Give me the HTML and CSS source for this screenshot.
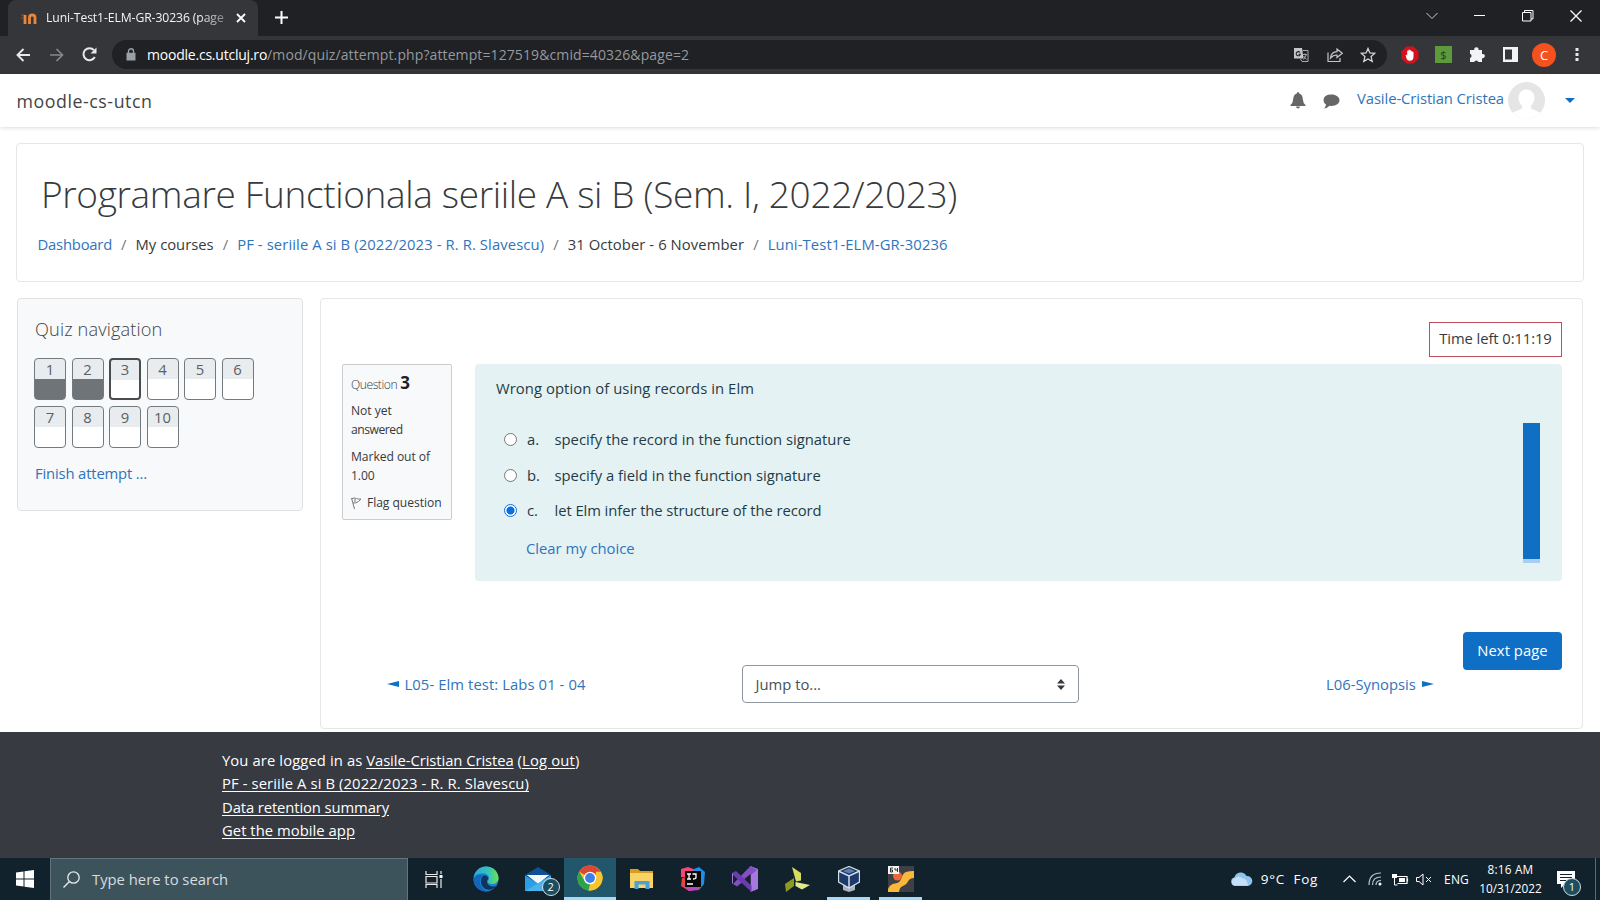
FILE: index.html
```html
<!DOCTYPE html>
<html lang="en">
<head>
<meta charset="utf-8">
<title>Luni-Test1-ELM-GR-30236 (page 3 of 10)</title>
<link rel="stylesheet" href="styles.css">
</head>
<body>
<div class="tabstrip">
  <div class="tab">
    <svg class="favicon" width="18" height="14" viewBox="0 0 18 14"><path d="M1 4h4M1 7h2" stroke="#7a4a2c" stroke-width="1.5"/><path d="M5 13V4M9.500 13V6.500q0-2.500 2.700-2.500t2.800 2.500V13" fill="none" stroke="#e8873a" stroke-width="2.800"/></svg>
    <span class="tab-title">Luni-Test1-ELM-GR-30236 (page</span>
    <svg class="tab-close" width="10" height="10" viewBox="0 0 10 10"><path d="M1 1l8 8M9 1l-8 8" stroke="#fff" stroke-width="1.800"/></svg>
  </div>
  <svg class="newtab" width="13" height="13" viewBox="0 0 13 13"><path d="M6.500 0v13M0 6.500h13" stroke="#fff" stroke-width="2"/></svg>
  <div class="winctl">
    <svg width="12" height="8" viewBox="0 0 12 8"><path d="M.5 1l5.500 5.500L11.500 1" fill="none" stroke="#ccc"/></svg>
    <svg width="12" height="12" viewBox="0 0 12 12"><path d="M0 5.500h11" stroke="#fff"/></svg>
    <svg width="12" height="12" viewBox="0 0 12 12"><path d="M.5 2.500h8.500v8.500H.5zM2.500 2.500v-2h8.500v8.500H9" fill="none" stroke="#fff"/></svg>
    <svg width="12" height="12" viewBox="0 0 12 12"><path d="M.5.500l11 11M11.500.500l-11 11" stroke="#fff" stroke-width="1.200"/></svg>
  </div>
</div>
<div class="toolbar">
  <svg class="nav-back" width="14" height="14" viewBox="0 0 14 14"><path d="M14 7H1.500M7.500 1L1.500 7l6 6" fill="none" stroke="#e8e8e8" stroke-width="1.900"/></svg>
  <svg class="nav-fwd" width="14" height="14" viewBox="0 0 14 14"><path d="M0 7h12.500M6.500 1l6 6-6 6" fill="none" stroke="#86888b" stroke-width="1.700"/></svg>
  <svg class="nav-reload" width="15" height="15" viewBox="0 0 15 15"><path d="M12.800 10A6 6 0 1 1 12 3.200" fill="none" stroke="#e8e8e8" stroke-width="2"/><path d="M14.500.500v6h-6z" fill="#e8e8e8"/></svg>
  <div class="omnibox">
    <svg class="lock" width="10" height="13" viewBox="0 0 10 13"><path d="M.5 4.800h9V12.500h-9z" fill="#9aa0a6"/><path d="M2.500 5V3.300a2.500 2.500 0 0 1 5 0V5" fill="none" stroke="#9aa0a6" stroke-width="1.400"/></svg>
    <span class="url"><span class="host">moodle.cs.utcluj.ro</span><span class="path">/mod/quiz/attempt.php?attempt=127519&amp;cmid=40326&amp;page=2</span></span>
    <div class="omni-actions">
      <svg width="16" height="16" viewBox="0 0 16 16"><path d="M1 1h8l1.500 10.500H1z" fill="#c4c7c9"/><path d="M7 5.500a2.100 2.100 0 1 0 .3 1.800H5.500" fill="none" stroke="#202124" stroke-width="1.100"/><path d="M9.500 3.500h5.500v11H9l-1.500-2.500M9.500 7.500h4.500M12 6.500v1M10.500 12.500l3-5M10.500 9l3 3.500" fill="none" stroke="#a9abad"/></svg>
      <svg width="16" height="16" viewBox="0 0 16 16"><path d="M1 5.500v9h12v-3.500" fill="none" stroke="#c4c7c9" stroke-width="1.200"/><path d="M3.500 11q.8-6 6.500-6.300V2l5.300 4.300L10 10.500V8q-4 0-6.500 3z" fill="none" stroke="#c4c7c9" stroke-width="1.200"/></svg>
      <svg width="16" height="16" viewBox="0 0 16 16"><path d="M8 1.500l1.900 4.500 4.800.4-3.600 3.200 1.100 4.800L8 11.900l-4.200 2.500 1.100-4.800L1.300 6.400 6.100 6z" fill="none" stroke="#d4d6d8" stroke-width="1.300"/></svg>
    </div>
  </div>
  <div class="extensions">
    <svg width="18" height="18" viewBox="0 0 18 18"><path d="M5.500.500h7l5 5v7l-5 5h-7l-5-5v-7z" fill="#d5121c"/><path d="M4.600 9q.8-.8 1.600.4V5q.6-.8 1.200 0V3.900q.7-.8 1.400 0V4.500q.7-.7 1.400.1v1q.8-.6 1.500.1.800 0 .8 1V10.500q0 4.300-3.700 4.300-2.900 0-3.600-3.300z" fill="#fff"/></svg>
    <span class="ext-green">$</span>
    <svg width="17" height="17" viewBox="0 0 17 17"><path d="M1 4h4.300a2.200 2.200 0 1 1 4.200 0H13v4a2.200 2.200 0 1 1 0 4.200V16H9.400a2.200 2.200 0 0 0-4.200 0H1v-4a2.200 2.200 0 0 0 0-4.200z" fill="#f1f3f4"/></svg>
    <svg width="15" height="15" viewBox="0 0 15 15"><path d="M0 0h15v15H0zM2 2.500v10h7v-10z" fill="#f1f3f4" fill-rule="evenodd"/></svg>
    <span class="profile">C</span>
    <svg width="4" height="15" viewBox="0 0 4 15"><path d="M.5 1h3v3h-3zM.5 6h3v3h-3zM.5 11h3v3h-3z" fill="#e8e8e8"/></svg>
  </div>
</div>

<nav class="navbar">
  <span class="brand">moodle-cs-utcn</span>
  <div class="user">
    <svg class="bell" width="16" height="17" viewBox="0 0 16 17"><path d="M8 0q1.200 0 1.200 1.500Q12.500 2.400 12.800 7q.2 4 2.700 6v1H.5v-1q2.500-2 2.700-6 .3-4.600 3.600-5.500Q6.800 0 8 0zM6 14.500h4Q9.800 16.500 8 16.500t-2-2z" fill="#666"/></svg>
    <svg class="chat" width="17" height="15" viewBox="0 0 17 15"><path d="M8.500.500C13 .5 16.500 3 16.500 6.200s-3.500 5.700-8 5.700q-1 0-2-.2Q4 14.500 1 14.500q1.800-1.500 2-4Q.5 9 .5 6.200.5.500 8.500.500z" fill="#666"/></svg>
    <a class="username">Vasile-Cristian Cristea</a>
    <svg class="avatar" width="37" height="37" viewBox="0 0 37 37"><defs><clipPath id="av"><circle cx="18.500" cy="18.500" r="18.500"/></clipPath></defs><g clip-path="url(#av)"><path d="M0 0h37v37H0z" fill="#e5e5e5"/><path d="M18.500 7.500c5 0 8 4 8 8.500 0 3.500-2 6.500-3.500 8v2.500l9 4V37H5v-6.500l9-4V24c-1.500-1.500-3.500-4.500-3.500-8 0-4.500 3-8.500 8-8.500z" fill="#fff"/></g></svg>
    <svg class="caret" width="10" height="5" viewBox="0 0 10 5"><path d="M0 0h10L5 5z" fill="#0f6fc5"/></svg>
  </div>
</nav>

<header class="page-header">
  <h1>Programare Functionala seriile A si B (Sem. I, 2022/2023)</h1>
  <div class="crumbs">
    <a class="c-dash">Dashboard</a><i>/</i><span>My courses</span><i>/</i><a class="course-link">PF - seriile A si B (2022/2023 - R. R. Slavescu)</a><i>/</i><span class="c-week">31 October - 6 November</span><i>/</i><a class="c-quiz">Luni-Test1-ELM-GR-30236</a>
  </div>
</header>

<div class="columns">
  <aside class="quiznav">
    <h2>Quiz navigation</h2>
    <div class="qgrid">
      <span class="q done">1</span><span class="q done">2</span><span class="q current">3</span><span class="q">4</span><span class="q">5</span><span class="q">6</span><span class="q">7</span><span class="q">8</span><span class="q">9</span><span class="q">10</span>
    </div>
    <a class="finish">Finish attempt ...</a>
  </aside>
  <main class="region">
    <div class="timer">Time left 0:11:19</div>
    <div class="question">
      <div class="info">
        <div class="qno"><span class="tight">Question</span> <b>3</b></div>
        <div class="state">Not yet<br><span class="tight">answered</span></div>
        <div class="grade">Marked out of<br>1.00</div>
        <div class="flag"><svg width="11" height="12" viewBox="0 0 11 12"><path d="M.5 1L3.500 12M1 1.500q2.500-1 4.500 0T10 2L7.500 4.500q-3 2-5.500 1.500M4 2v3" fill="none" stroke="#777" stroke-width="1"/></svg><span>Flag question</span></div>
      </div>
      <div class="formulation">
        <div class="answers">
          <p class="qtext">Wrong option of using records in Elm</p>
          <label class="opt"><span class="radio"></span><span class="let">a.</span><span>specify the record in the function signature</span></label>
          <label class="opt"><span class="radio"></span><span class="let">b.</span><span>specify a field in the function signature</span></label>
          <label class="opt"><span class="radio on"></span><span class="let">c.</span><span class="o3">let Elm infer the structure of the record</span></label>
          <a class="clear">Clear my choice</a>
        </div>
        <div class="meter"></div>
      </div>
    </div>
    <div class="submit"><span class="next">Next page</span></div>
    <div class="activity-nav">
      <a class="prev"><svg width="12" height="6" viewBox="0 0 12 6"><path d="M0 3L12 0v6z" fill="#0f6fc5"/></svg><span>L05- Elm test: Labs 01 - 04</span></a>
      <div class="jump"><span>Jump to...</span><svg width="8" height="11" viewBox="0 0 8 11"><path d="M0 4.500h8L4 0zM0 6.500h8L4 11z" fill="#343a40"/></svg></div>
      <a class="nextact"><span>L06-Synopsis</span><svg width="12" height="6" viewBox="0 0 12 6"><path d="M12 3L0 0v6z" fill="#0f6fc5"/></svg></a>
    </div>
  </main>
</div>

<footer class="footer">
  <div><span class="f-login">You are logged in as</span> <a class="f-user">Vasile-Cristian Cristea</a> <span class="f-out">(<a>Log out</a>)</span></div>
  <div><a class="course-link">PF - seriile A si B (2022/2023 - R. R. Slavescu)</a></div>
  <div><a class="f-data">Data retention summary</a></div>
  <div><a class="f-app">Get the mobile app</a></div>
</footer>

<div class="taskbar">
  <div class="start"><svg width="18" height="18" viewBox="0 0 18 18"><path d="M0 2.500L7.500 1.500v7H0zM8.500 1.300L18 0v8.500H8.500zM0 9.500h7.500v7L0 15.500zM8.500 9.500H18V18l-9.500-1.300z" fill="#fff"/></svg></div>
  <div class="search"><svg width="17" height="17" viewBox="0 0 17 17"><circle cx="10.500" cy="6.500" r="5.700" fill="none" stroke="#e4eaec" stroke-width="1.300"/><path d="M6.500 10.500L.5 16.500" stroke="#e4eaec" stroke-width="1.400"/></svg><span>Type here to search</span></div>
  <div class="apps">
    <div class="app"><svg width="18" height="17" viewBox="0 0 18 17"><path d="M1 0v3.500h11V0M1 17v-3.500h11V17M1 5.500h11v6.500H1zM16 0v3M16 8v9" fill="none" stroke="#e8ecee" stroke-width="1.200"/><path d="M14.500 4h3v3h-3z" fill="#fff"/></svg></div>
    <div class="app"><svg width="26" height="26" viewBox="0 0 26 26"><defs><linearGradient id="e1" x1="0" y1="0" x2="1" y2="0"><stop offset="0" stop-color="#2aa9dc"/><stop offset=".6" stop-color="#35c4b8"/><stop offset="1" stop-color="#6ee04c"/></linearGradient></defs><circle cx="13" cy="13" r="12.500" fill="#1683d3"/><path d="M.6 12C1.500 5 7 .5 13 .5 20.500.5 25.500 6 25.500 12c0 4-3 6-6.500 6-3 0-4.200-1.500-4.200-2.300 0-1 1.200-1.500 1.200-3.700 0-3-3-4.800-6.500-4.800C5 7.200 2 9 .6 12z" fill="url(#e1)"/><path d="M10.500 9.500c-3.500 3-3.500 9 .5 12.500 3 2.500 8.500 2.500 12.500-2-4.500 1.500-10-.5-9.500-5 .1-1 1.300-1.500 1.300-3q-1.300-3.300-4.800-2.500z" fill="#12345c"/><path d="M10.500 9.500C5 12 5.500 22 14 25.400 6.500 26 .5 20.500.5 13.500 2 9 7 8 10.500 9.500z" fill="#1467b8"/></svg></div>
    <div class="app mail"><svg width="28" height="25" viewBox="0 0 28 25"><path d="M0 8L13 0l13 8v16H0z" fill="#0f4f94"/><path d="M2 8h22l-11 9z" fill="#fff"/><path d="M0 8.500l13 8 13-8V24H0z" fill="#2b9fe4"/><path d="M2 8h22l-11 7z" fill="#f2f8fc"/><path d="M0 24l26-15.500V24z" fill="#47b4ee"/></svg><span class="badge">2</span></div>
    <div class="app active"><svg width="26" height="26" viewBox="0 0 26 26"><circle cx="13" cy="13" r="12.500" fill="#f7c52c"/><path d="M13 13L2.200 6.700A12.500 12.500 0 0 1 23.800 6.700z" fill="#e04435"/><path d="M2.200 6.700L8 16.500l5 2.500-1.500 6.400A12.500 12.500 0 0 1 2.200 6.700z" fill="#2ba24c"/><path d="M11.500 25.400L18 14l1-7.300h4.800A12.500 12.500 0 0 1 11.500 25.400z" fill="#f7c52c"/><circle cx="13" cy="13" r="6.300" fill="#fff"/><circle cx="13" cy="13" r="4.900" fill="#3f7fe8"/></svg></div>
    <div class="app"><svg width="24" height="22" viewBox="0 0 24 22"><path d="M0 1h8l2 2h13v6H0z" fill="#d99d1f"/><path d="M0 5h23v15H0z" fill="#f8d365"/><path d="M4.500 21v-8h15v8h-4v-4.500h-7V21z" fill="#4c9fd8"/></svg></div>
    <div class="app"><svg width="26" height="26" viewBox="0 0 26 26"><path d="M1 3l7-2 8 3-3 9L1 11z" fill="#f4467a"/><path d="M14 3l5-2 6 5-1 12-5 6-6-3z" fill="#1e8ee8"/><path d="M2 12l-1 8 8 5 10-2-6-10z" fill="#e8472c"/><path d="M2 18l7 7 10-1-4-6z" fill="#b848c8"/><path d="M5 5h16v16H5z" fill="#080808"/><path d="M7 8h4M9 8v5M7 13h4M12.500 8H16v3.500q0 1.500-3 1.500M7 18h6" fill="none" stroke="#fff" stroke-width="1.300"/></svg></div>
    <div class="app"><svg width="26" height="26" viewBox="0 0 26 26"><path d="M18.500 0L26 3v20l-7.500 3z" fill="#a678df"/><path d="M18.500 0L25 4 5 20.500l-4-2.500z" fill="#8350c2"/><path d="M0 7l4-2 15.500 14.500V26L1 9z" fill="#6a3cae"/><path d="M0 7l1 1v10l-1-1z" fill="#a678df"/><path d="M18.500 8v10.500L12.500 13z" fill="#171f30"/></svg></div>
    <div class="app"><svg width="25" height="25" viewBox="0 0 25 25"><path d="M7 0l9 6v7.500l-5 1z" fill="#d5dc5e"/><path d="M9 11v8l-8 6-1-8z" fill="#8c9a22"/><path d="M10.500 15l14.500 3-8 4.500-6.500-3.500z" fill="#e3e88c"/></svg></div>
    <div class="app open"><svg width="22" height="26" viewBox="0 0 22 26"><path d="M5 18h12v6l-6 2-6-2z" fill="#a9b4c0"/><path d="M11 .5L21.500 5v11L11 22 .5 16V5z" fill="#1c3b6b" stroke="#d6dee8" stroke-width="1.300"/><path d="M.8 5.200L11 10l10.200-4.800M11 10v12" fill="none" stroke="#d6dee8" stroke-width="1.500"/><path d="M5 5l6-2.500L17 5l-6 2.500z" fill="#5c7fae"/></svg></div>
    <div class="app open"><svg width="26" height="26" viewBox="0 0 26 26"><path d="M0 0h26v26H0z" fill="#3f3f46"/><path d="M26 5v7q-4.500 0-6 3.500t-5 4.500-4 6H0v-3q2-5 7-5.500t6.500-5.500 4.500-6 8-1z" fill="#f9b83c"/><circle cx="9.500" cy="10" r="4.500" fill="#e8693a"/><path d="M0 0h11v8H0z" fill="#f4f4f4"/><path d="M5 2H2.500v4h2v-2h-2M7 2v2h3M9.500 2v4" fill="none" stroke="#333"/></svg></div>
  </div>
  <div class="tray">
    <svg class="cloud" width="23" height="14" viewBox="0 0 23 14"><path d="M5 14a4.500 4.500 0 0 1-.5-8.800A6.500 6.500 0 0 1 16.500 4 5 5 0 0 1 18 14z" fill="#8fc4ee"/><path d="M4 13.500a4 4 0 0 1 1-7.500q4-3 7 0 5 0 6 7.500z" fill="#c5e0f7"/></svg>
    <span class="weather">9°C&nbsp; Fog</span>
    <svg class="up" width="13" height="8" viewBox="0 0 13 8"><path d="M.5 7l6-6 6 6" fill="none" stroke="#fff" stroke-width="1.200"/></svg>
    <svg class="wifi" width="14" height="14" viewBox="0 0 14 14"><path d="M1 13Q1 1 13 1M4.500 13Q4.500 5 13 5M8 13Q8 8.500 13 8.500" fill="none" stroke="#b8c2c6" stroke-width="1.200"/><circle cx="12" cy="12" r="1.500" fill="#fff"/></svg>
    <svg class="batt" width="17" height="13" viewBox="0 0 17 13"><path d="M4.500 3.500h10.500v7H5.500M15.500 5.500v3" fill="none" stroke="#fff" stroke-width="1.200"/><path d="M7 5h6v4H7zM0 1h5v4H0z" fill="#fff"/><path d="M2.500 5v7h3" fill="none" stroke="#fff"/></svg>
    <svg class="vol" width="16" height="13" viewBox="0 0 16 13"><path d="M.5 4.500H3L7 1v11L3 8.500H.5zM10 4l5 5M15 4l-5 5" fill="none" stroke="#fff"/></svg>
    <span class="lang">ENG</span>
    <div class="clock"><span class="time">8:16 AM</span><span>10/31/2022</span></div>
    <div class="notif"><svg width="18" height="17" viewBox="0 0 18 17"><path d="M0 0h18v13H8l-4 4v-4H0z" fill="#fff"/><path d="M3 3.500h12M3 6.500h12M3 9.500h7" stroke="#14242e"/></svg><span class="badge nb">1</span></div>
  </div>
</div>
</body>
</html>
```
FILE: styles.css
```css
* { box-sizing: border-box; }
html, body { margin: 0; height: 100%; }
body { width: 1600px; height: 900px; overflow: hidden; display: flex; flex-direction: column; background: #fff; color: #373a3c; font: 14.8px/23px "Open Sans", "Noto Sans", sans-serif; }
svg { display: block; flex: none; }
span, a { white-space: nowrap; }
a { color: #2f74bd; text-decoration: none; }
h1, h2, p { margin: 0; font-weight: 300; }

.tabstrip { height: 36px; flex: none; background: #202124; display: flex; align-items: center; padding-left: 8px; }
.tab { width: 250px; height: 36px; background: #35363a; border-radius: 8px 8px 0 0; display: flex; align-items: center; padding: 0 12px; }
.tab-title { width: 181px; margin: -1px 11px 0 8px; font-size: 12.2px; letter-spacing: -.1px; color: #f1f3f4; -webkit-mask-image: linear-gradient(90deg, #000 85%, rgba(0,0,0,.4)); }
.newtab { margin-left: 17px; margin-top: -1px; }
.winctl { margin: -4px 0 0 auto; display: flex; gap: 36px; align-items: center; padding-right: 18px; }

.toolbar { height: 38px; flex: none; background: #35363a; display: flex; align-items: center; padding: 0 0 1px 16px; }
.nav-fwd { margin-left: 20px; }
.nav-reload { margin-left: 18px; }
.omnibox { width: 1275px; height: 29px; margin-left: 15px; border-radius: 15px; background: #202124; display: flex; align-items: center; padding: 0 11px 0 14px; }
.url { margin-left: 11px; font-size: 14px; display: flex; }
.host { color: #fff; letter-spacing: -.22px; }
.path { color: #96999d; letter-spacing: .105px; }
.omni-actions { margin-left: auto; display: flex; gap: 17.500px; }
.extensions { display: flex; align-items: center; margin-left: 14px; }
.ext-green { width: 17px; height: 17px; margin: 0 17px 0 16px; background: #5c9a3c; color: #24421a; font-size: 11px; line-height: 17px; text-align: center; }
.extensions svg:nth-child(4) { margin-left: 17px; }
.profile { width: 24px; height: 24px; margin: 0 19px 0 14px; border-radius: 50%; background: #f4511e; color: #fff; font-size: 13px; line-height: 24px; text-align: center; }

.navbar { height: 53px; flex: none; background: #fff; box-shadow: 0 1px 4px rgba(0,0,0,.14); display: flex; align-items: center; justify-content: space-between; padding: 0 25px 0 16.500px; }
.brand { font-size: 17.800px; letter-spacing: .55px; color: #444; padding-top: 1px; }
.user { display: flex; align-items: center; }
.chat { margin: 1px 17px 0 17px; }
.username { margin-bottom: 4px; letter-spacing: -.083px; }
.avatar { margin: 0 20px 0 4px; }

.page-header { flex: none; height: 139px; margin: 16px 16px 0; border: 1px solid #e4e6e8; border-radius: 4px; padding: 25px 20px 0; }
h1 { font-size: 37px; line-height: 50px; letter-spacing: -.35px; padding-left: 4px; color: #373a3c; white-space: nowrap; }
.crumbs { display: flex; margin-top: 14px; padding-left: .5px; }
.crumbs i { font-style: normal; color: #777; width: 23.500px; text-align: center; }
.c-dash { letter-spacing: -.2px; }
.course-link { letter-spacing: .104px; }
.c-week { letter-spacing: .084px; }
.c-quiz { letter-spacing: .115px; }

.columns { display: flex; align-items: flex-start; margin: 16px 17px 0; gap: 17px; height: 434px; flex: none; }
.quiznav { width: 286px; height: 213px; background: #f7f9fa; border: 1px solid #e0e2e4; border-radius: 4px; padding: 17px 17px 0 16px; }
h2 { font-size: 18.200px; line-height: 26px; letter-spacing: .14px; color: #444; padding-left: 1px; }
.qgrid { display: grid; grid-template-columns: repeat(6, 32px); column-gap: 5.500px; row-gap: 6px; margin-top: 16px; }
.q { height: 42px; border: 1px solid #74797d; border-radius: 4px; text-align: center; line-height: 21px; color: #5a5f63; background: linear-gradient(#e9ecef 20px, #fff 20px); }
.q.done { background: linear-gradient(#e9ecef 20px, #6f7478 20px); }
.q.current { border: 2px solid #4a4d50; line-height: 19px; }
.finish { display: block; margin: 14px 0 0 1px; letter-spacing: -.154px; }

.region { flex: 1; height: 431px; border: 1px solid #e4e6e8; border-radius: 4px; padding: 23px 20px 0 21px; display: flex; flex-direction: column; }
.timer { align-self: flex-end; width: 133px; height: 35px; border: 1px solid #b9505a; text-align: center; line-height: 31px; letter-spacing: -.086px; }
.question { display: flex; justify-content: space-between; margin-top: 7px; }
.info { width: 110px; height: 156px; border: 1px solid #caced1; border-radius: 2px; background: #f7f9fa; padding: 8px 0 0 8px; font-size: 12.100px; line-height: 18.500px; letter-spacing: -.05px; }
.tight { letter-spacing: -.45px; }
.qno { font-weight: 300; line-height: 20px; }
.qno b { font-size: 17px; font-weight: 700; color: #1d2125; }
.state { margin-top: 7px; }
.grade { margin-top: 9px; }
.flag { display: flex; align-items: center; gap: 5px; margin-top: 9px; }
.formulation { width: 1087px; height: 217px; border-radius: 4px; background: #e5f2f4; color: #1f3c45; display: flex; justify-content: space-between; padding: 0 22px 0 21px; }
.qtext { font-weight: 400; letter-spacing: .068px; padding-top: 13px; margin-bottom: 28px; }
.opt { display: flex; align-items: center; height: 23px; margin-bottom: 12.500px; padding-left: 8px; }
.o3 { letter-spacing: -.071px; }
.radio { width: 13px; height: 13px; border: 1px solid #777; border-radius: 50%; background: #fff; margin-right: 10px; }
.radio.on { border: 1.500px solid #0b6fe0; background: radial-gradient(#0b6fe0 0 3.800px, #fff 4.300px); }
.let { width: 27.500px; }
.clear { display: block; margin: 15px 0 0 30px; }
.meter { width: 17px; height: 140px; margin-top: 59px; background: #0f6fc5; border-bottom: 4px solid #a9cff0; }
.submit { display: flex; justify-content: flex-end; margin-top: 51px; }
.next { width: 99px; height: 38px; border-radius: 4px; background: #0f6fc5; color: #fff; text-align: center; line-height: 37px; letter-spacing: .06px; }
.activity-nav { display: grid; grid-template-columns: 399.500px 337.500px 1fr; align-items: center; margin-top: -5px; }
.prev { display: flex; align-items: center; gap: 5.500px; padding-left: 45px; letter-spacing: .09px; }
.jump { height: 38px; border: 1px solid #8f959e; border-radius: 4px; display: flex; align-items: center; justify-content: space-between; padding: 0 13px; color: #495057; }
.nextact { display: flex; align-items: center; gap: 6px; padding-left: 247px; }

.footer { flex: none; height: 126px; background: #373a41; color: #fff; padding: 17px 0 0 222px; line-height: 23.400px; }
.footer div { height: 23.400px; }
.footer a { color: #fff; text-decoration: underline; text-underline-offset: 2px; }
.f-login { letter-spacing: .1px; }
.f-user { letter-spacing: -.061px; }
.f-out { letter-spacing: .165px; }
.f-data { letter-spacing: -.107px; }
.f-app { letter-spacing: .04px; }

.taskbar { flex: none; height: 42px; background: #12222c; display: flex; }
.start { width: 50px; display: grid; place-items: center; }
.search { width: 358px; background: #3d535b; border: 1px solid #63757c; border-bottom: 0; display: flex; align-items: center; gap: 12px; padding-left: 12px; color: #d5dde0; }
.apps { display: flex; }
.app { width: 51.900px; display: grid; place-items: center; position: relative; }
.app.active { background: #22566a; border-bottom: 3px solid #a7d8f5; }
.app.open::after { content: ""; position: absolute; left: 4px; right: 5px; bottom: 0; height: 3px; background: #a7d8f5; }
.badge { position: absolute; right: 4px; bottom: 4px; width: 18px; height: 18px; border: 1px solid #cfdfe6; border-radius: 50%; background: #1d4d61; color: #fff; font-size: 11px; line-height: 16px; text-align: center; }
.mail svg { margin-left: 2px; }
.tray { margin-left: auto; display: flex; align-items: center; color: #fff; font-size: 13.500px; padding-right: 5px; border-right: 1px solid #5c6a71; margin-right: 4px; }
.cloud { margin-right: 8px; }
.weather { letter-spacing: .75px; }
.up { margin: 0 12px 0 25px; }
.batt { margin: 0 7px 0 10px; }
.lang { margin-left: 12px; font-size: 12px; letter-spacing: .15px; }
.clock { display: flex; flex-direction: column; align-items: center; margin: 0 15px 0 10px; font-size: 11.800px; line-height: 19px; width: 63px; }
.time { letter-spacing: .2px; }
.notif { position: relative; width: 33px; }
.nb { right: 9px; bottom: -8px; }
```
